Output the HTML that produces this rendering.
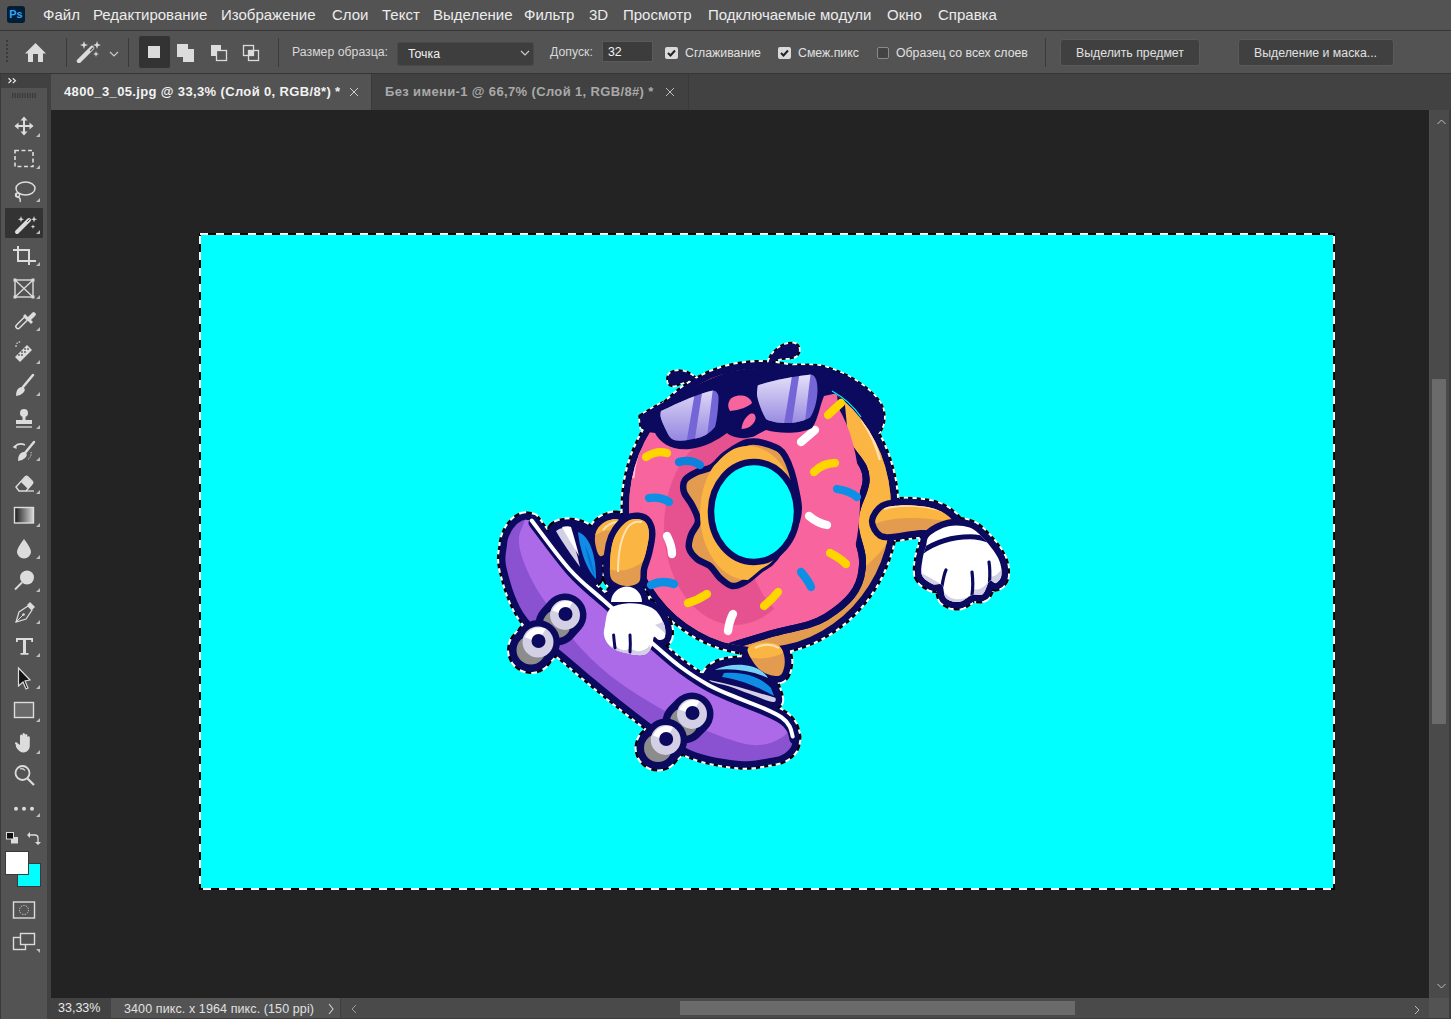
<!DOCTYPE html>
<html><head><meta charset="utf-8">
<style>
*{margin:0;padding:0;box-sizing:border-box}
html,body{width:1451px;height:1019px;overflow:hidden;background:#535353;font-family:"Liberation Sans",sans-serif;color:#e6e6e6}
.a{position:absolute}
#menubar{left:0;top:0;width:1451px;height:30px;background:#535353}
.mi{position:absolute;top:6px;font-size:15px;color:#ececec;white-space:nowrap}
#optline{left:0;top:30px;width:1451px;height:1px;background:#363636}
#opts{left:0;top:31px;width:1451px;height:42px;background:#535353}
#optline2{left:0;top:73px;width:1451px;height:1px;background:#363636}
.ot{position:absolute;font-size:12.3px;color:#e0e0e0;white-space:nowrap}
.tt{position:absolute;top:84px;font-size:13px;font-weight:bold;white-space:nowrap;letter-spacing:0.36px}
#tabrow{left:50px;top:74px;width:1401px;height:36px;background:#424242}
#canvas{left:51px;top:110px;width:1378px;height:888px;background:#232323}
#vscroll{left:1429px;top:110px;width:20px;height:888px;background:#4a4a4a;border-left:1px solid #4f4f4f}
#rstrip{left:1449px;top:110px;width:2px;height:909px;background:#3c3c3c}
#status{left:51px;top:998px;width:1398px;height:21px;background:#4a4a4a}
#toolhdr{left:1px;top:74px;width:46px;height:14px;background:#414141}
#tools{left:1px;top:89px;width:46px;height:930px;background:#535353}
#leftedge{left:0;top:74px;width:1px;height:945px;background:#3a3a3a}
#sep{left:47px;top:74px;width:4px;height:945px;background:#414141}
</style></head><body>
<div class="a" id="menubar">
  <div class="a" style="left:7px;top:6px;width:18px;height:17px;border-radius:3px;background:#001e36;color:#31a8ff;font-weight:bold;font-size:11px;line-height:17px;text-align:center">Ps</div>
  <span class="mi" style="left:43px">Файл</span>
  <span class="mi" style="left:93px">Редактирование</span>
  <span class="mi" style="left:221px">Изображение</span>
  <span class="mi" style="left:332px">Слои</span>
  <span class="mi" style="left:382px">Текст</span>
  <span class="mi" style="left:433px">Выделение</span>
  <span class="mi" style="left:524px">Фильтр</span>
  <span class="mi" style="left:589px">3D</span>
  <span class="mi" style="left:623px">Просмотр</span>
  <span class="mi" style="left:708px">Подключаемые модули</span>
  <span class="mi" style="left:887px">Окно</span>
  <span class="mi" style="left:938px">Справка</span>
</div>
<div class="a" id="optline"></div>
<div class="a" id="opts">
  <div class="a" style="left:6px;top:9px;width:2px;height:24px;background:repeating-linear-gradient(#3a3a3a 0 2px,transparent 2px 4px)"></div>
  <svg class="a" style="left:24px;top:11px" width="23" height="21" viewBox="0 0 23 21"><path d="M1 11.5 L11.5 1 L22 11.5 L19 11.5 L19 20 L14 20 L14 12 L9 12 L9 20 L4 20 L4 11.5 Z" fill="#dcdcdc"/></svg>
  <div class="a" style="left:66px;top:7px;width:1px;height:29px;background:#3a3a3a"></div>
  <svg class="a" style="left:76px;top:8.5px" width="26" height="23" viewBox="0 0 26 23"><path d="M3 21 L16 8" stroke="#dcdcdc" stroke-width="4.5" stroke-linecap="round"/><path d="M14.5 10.5 L17 8" stroke="#535353" stroke-width="1.2" stroke-linecap="round"/><path d="M8 1 L9 4 L12 5 L9 6 L8 9 L7 6 L4 5 L7 4Z M21 1 L22 4 L25 5 L22 6 L21 9 L20 6 L17 5 L20 4Z M20 11 L20.7 13.3 L23 14 L20.7 14.7 L20 17 L19.3 14.7 L17 14 L19.3 13.3Z" fill="#dcdcdc"/></svg>
  <svg class="a" style="left:109px;top:20px" width="10" height="7" viewBox="0 0 10 7"><path d="M1 1 L5 5 L9 1" stroke="#cfcfcf" stroke-width="1.1" fill="none"/></svg>
  <div class="a" style="left:128px;top:7px;width:1px;height:29px;background:#3a3a3a"></div>
  <div class="a" style="left:139px;top:5px;width:31px;height:32px;background:#333;border-radius:2px"></div>
  <div class="a" style="left:148px;top:15px;width:12px;height:12px;background:#dcdcdc"></div>
  <svg class="a" style="left:176px;top:12px" width="20" height="20" viewBox="0 0 20 20"><path d="M1 1h11v5h6v13H7v-5H1z" fill="#dcdcdc"/></svg>
  <svg class="a" style="left:210px;top:13px" width="18" height="18" viewBox="0 0 18 18"><path d="M1 1h10v5h-5v6H1z" fill="#dcdcdc"/><rect x="6.5" y="6.5" width="10" height="10" fill="none" stroke="#dcdcdc" stroke-width="1.3"/></svg>
  <svg class="a" style="left:242px;top:13px" width="18" height="18" viewBox="0 0 18 18"><rect x="1.5" y="1.5" width="10" height="10" fill="none" stroke="#dcdcdc" stroke-width="1.3"/><rect x="6.5" y="6.5" width="10" height="10" fill="none" stroke="#dcdcdc" stroke-width="1.3"/><rect x="6.5" y="6.5" width="5" height="5" fill="#dcdcdc"/></svg>
  <div class="a" style="left:278px;top:7px;width:1px;height:29px;background:#3a3a3a"></div>
  <span class="ot" style="left:292px;top:14px;color:#d8d8d8">Размер образца:</span>
  <div class="a" style="left:397px;top:11px;width:137px;height:24px;background:#3e3e3e;border:1px solid #494949;border-radius:3px"></div>
  <span class="ot" style="left:408px;top:16px;color:#f0f0f0">Точка</span>
  <svg class="a" style="left:520px;top:19px" width="10" height="7" viewBox="0 0 10 7"><path d="M1 1 L5 5 L9 1" stroke="#cfcfcf" stroke-width="1.1" fill="none"/></svg>
  <span class="ot" style="left:550px;top:14px;color:#d8d8d8">Допуск:</span>
  <div class="a" style="left:602px;top:10px;width:51px;height:21px;background:#3c3c3c;border:1px solid #5a5a5a"></div>
  <span class="ot" style="left:608px;top:14px;color:#f0f0f0">32</span>
  <div class="a" style="left:665px;top:16px;width:13px;height:12px;background:#dadada;border-radius:2px"></div>
  <svg class="a" style="left:665px;top:16px" width="13" height="12" viewBox="0 0 13 12"><path d="M3 6 L5.5 8.5 L10 3.5" stroke="#222" stroke-width="2" fill="none"/></svg>
  <span class="ot" style="left:685px;top:15px">Сглаживание</span>
  <div class="a" style="left:778px;top:16px;width:13px;height:12px;background:#dadada;border-radius:2px"></div>
  <svg class="a" style="left:778px;top:16px" width="13" height="12" viewBox="0 0 13 12"><path d="M3 6 L5.5 8.5 L10 3.5" stroke="#222" stroke-width="2" fill="none"/></svg>
  <span class="ot" style="left:798px;top:15px">Смеж.пикс</span>
  <div class="a" style="left:877px;top:16px;width:12px;height:12px;background:#444;border:1px solid #8a8a8a;border-radius:2px"></div>
  <span class="ot" style="left:896px;top:15px">Образец со всех слоев</span>
  <div class="a" style="left:1045px;top:7px;width:1px;height:29px;background:#3a3a3a"></div>
  <div class="a" style="left:1060px;top:8px;width:140px;height:27px;background:#404040;border:1px solid #5a5a5a;border-radius:3px"></div>
  <span class="ot" style="left:1076px;top:15px">Выделить предмет</span>
  <div class="a" style="left:1238px;top:8px;width:156px;height:27px;background:#404040;border:1px solid #5a5a5a;border-radius:3px"></div>
  <span class="ot" style="left:1254px;top:15px">Выделение и маска...</span>
</div>
<div class="a" id="optline2"></div>
<div class="a" id="tabrow">
  <div class="a" style="left:1px;top:0;width:320px;height:36px;background:#535353"></div>
  <div class="a" style="left:321px;top:0;width:1px;height:36px;background:#393939"></div>
  <div class="a" style="left:322px;top:0;width:316px;height:36px;background:#414141"></div>
  <div class="a" style="left:638px;top:0;width:1px;height:36px;background:#393939"></div>
</div>
<span class="tt" style="left:64px;color:#f2f2f2">4800_3_05.jpg @ 33,3% (Слой 0, RGB/8*) *</span>
<svg class="a" style="left:349px;top:87px" width="10" height="10" viewBox="0 0 10 10"><path d="M1 1L9 9M9 1L1 9" stroke="#cfcfcf" stroke-width="1"/></svg>
<span class="tt" style="left:385px;color:#a9a9a9">Без имени-1 @ 66,7% (Слой 1, RGB/8#) *</span>
<svg class="a" style="left:665px;top:87px" width="10" height="10" viewBox="0 0 10 10"><path d="M1 1L9 9M9 1L1 9" stroke="#bdbdbd" stroke-width="1"/></svg>

<div class="a" id="canvas"></div>
<div class="a" id="vscroll">
  <svg class="a" style="left:7px;top:9px" width="9" height="6" viewBox="0 0 9 6"><path d="M0.5 5L4.5 1L8.5 5" stroke="#bdbdbd" stroke-width="1" fill="none"/></svg>
  <div class="a" style="left:2px;top:269px;width:14px;height:345px;background:#6b6b6b;border-radius:1px"></div>
  <svg class="a" style="left:7px;top:873px" width="9" height="6" viewBox="0 0 9 6"><path d="M0.5 1L4.5 5L8.5 1" stroke="#bdbdbd" stroke-width="1" fill="none"/></svg>
</div>
<div class="a" id="rstrip"></div>
<div class="a" id="status">
  <div class="a" style="left:0;top:0;width:60px;height:20px;background:#424242"></div>
  <span class="a" style="left:7px;top:3px;font-size:12.5px;color:#e8e8e8">33,33%</span>
  <div class="a" style="left:60px;top:0;width:229px;height:20px;background:#535353"></div>
  <span class="a" style="left:73px;top:4px;font-size:12.5px;color:#e0e0e0;white-space:nowrap;letter-spacing:0.1px">3400 пикс. x 1964 пикс. (150 ppi)</span>
  <svg class="a" style="left:277px;top:5px" width="6" height="12" viewBox="0 0 6 12"><path d="M1 1L5 6L1 11" stroke="#d0d0d0" stroke-width="1.1" fill="none"/></svg>
  <div class="a" style="left:289px;top:0;width:1px;height:20px;background:#3e3e3e"></div>
  <svg class="a" style="left:300px;top:6px" width="6" height="10" viewBox="0 0 6 10"><path d="M5 1L1 5L5 9" stroke="#9a9a9a" stroke-width="1" fill="none"/></svg>
  <div class="a" style="left:629px;top:3px;width:395px;height:14px;background:#6b6b6b"></div>
  <svg class="a" style="left:1363px;top:7px" width="6" height="10" viewBox="0 0 6 10"><path d="M1 1L5 5L1 9" stroke="#bdbdbd" stroke-width="1" fill="none"/></svg>
  <div class="a" style="left:1378px;top:0;width:20px;height:20px;background:#535353"></div>
  <div class="a" style="left:0;top:20px;width:1398px;height:1px;background:#3c3c3c"></div>
</div>
<div class="a" id="leftedge"></div>
<div class="a" id="toolhdr"></div>
<div class="a" id="tools"></div>
<div class="a" id="sep"></div>
<svg class="a" style="left:0;top:0" width="48" height="1019" viewBox="0 0 48 1019">
<path d="M8.5 78.3l2.6 2.4-2.6 2.4M12.8 78.3l2.6 2.4-2.6 2.4" stroke="#e8e8e8" stroke-width="1.2" fill="none"/>
<g fill="#3a3a3a"><rect x="12" y="93" width="1.2" height="5"/><rect x="14.5" y="93" width="1.2" height="5"/><rect x="17" y="93" width="1.2" height="5"/><rect x="19.5" y="93" width="1.2" height="5"/><rect x="22" y="93" width="1.2" height="5"/><rect x="24.5" y="93" width="1.2" height="5"/><rect x="27" y="93" width="1.2" height="5"/><rect x="29.5" y="93" width="1.2" height="5"/><rect x="32" y="93" width="1.2" height="5"/><rect x="34.5" y="93" width="1.2" height="5"/></g>
<g fill="#dcdcdc" stroke="#dcdcdc">
<!-- move -->
<path d="M24 118v16M15.5 126h17" stroke-width="2" fill="none"/>
<path d="M24 116.5l-3.5 4h7z M24 135.5l-3.5-4h7z M14.5 126l4-3.5v7z M33.5 126l-4-3.5v7z" stroke="none"/>
<!-- marquee -->
<rect x="15" y="150.5" width="18" height="16" fill="none" stroke-width="1.6" stroke-dasharray="4 2.5"/>
<!-- lasso -->
<ellipse cx="25.5" cy="188.5" rx="9.5" ry="6.5" fill="none" stroke-width="1.5"/>
<path d="M17 193 q-2 3 1 4 q3 1 2 5" fill="none" stroke-width="1.4"/>
<circle cx="17.5" cy="195" r="2" fill="none" stroke-width="1.3"/>
</g>
<rect x="5" y="208" width="38" height="30" fill="#333" rx="1"/>
<g fill="#dcdcdc" stroke="#dcdcdc">
<!-- wand -->
<path d="M17 232 L29 220" stroke-width="4" stroke-linecap="round" fill="none"/>
<path d="M27.5 221.5 L29.3 219.7" stroke="#333" stroke-width="1" stroke-linecap="round"/>
<path d="M21 216l0.8 2.4 2.4.8-2.4.8-.8 2.4-.8-2.4-2.4-.8 2.4-.8z M34 216l0.8 2.4 2.4.8-2.4.8-.8 2.4-.8-2.4-2.4-.8 2.4-.8z M33 224.5l.6 1.6 1.6.6-1.6.6-.6 1.6-.6-1.6-1.6-.6 1.6-.6z" stroke="none"/>
<!-- crop -->
<path d="M18 246v15h15M13 250h16v15" fill="none" stroke-width="2"/>
<path d="M33 261h3" stroke-width="2"/>
<!-- frame -->
<rect x="15" y="280" width="18" height="17" fill="none" stroke-width="1.4"/>
<path d="M15 280L33 297M33 280L15 297" stroke-width="1.3"/>
<g stroke="none"><rect x="13.5" y="278.5" width="3" height="3"/><rect x="31.5" y="278.5" width="3" height="3"/><rect x="13.5" y="295.5" width="3" height="3"/><rect x="31.5" y="295.5" width="3" height="3"/></g>
<!-- eyedropper -->
<path d="M16.5 328 q-1.5-1.5 0-3 l8-8 3 3 -8 8 q-1.5 1.5-3 0z" fill="none" stroke-width="1.5"/>
<path d="M23 316l2-2 3 3 4-4q2-2 3 0q2 1 0 3l-4 4 2 2-2 2z" stroke="none"/>
<!-- healing -->
<path d="M20 362l-5-5 12-12 5 5z" stroke="none"/>
<path d="M16 347 q0-6 6-5" fill="none" stroke-width="1.2" stroke-dasharray="1.5 1.5"/>
<g fill="#535353" stroke="none"><circle cx="22" cy="352" r=".9"/><circle cx="25" cy="352" r=".9"/><circle cx="22" cy="355" r=".9"/><circle cx="25" cy="349" r=".9"/><circle cx="28" cy="349" r=".9"/><circle cx="19" cy="355" r=".9"/></g>
<!-- brush -->
<path d="M33 375 L23 387" stroke-width="2.5" stroke-linecap="round" fill="none"/>
<path d="M16 396 q0-6 3-8 q3-2 5 0 q2 2-1 5 q-3 3-7 3z" stroke="none"/>
<!-- stamp -->
<circle cx="24" cy="413" r="4" stroke="none"/>
<path d="M22.5 416h3v4h-3z M16 420h16v4H16z" stroke="none"/>
<path d="M16 427h16" stroke-width="1.3"/>
<!-- history brush -->
<path d="M34 442 L25 453" stroke-width="2.5" stroke-linecap="round" fill="none"/>
<path d="M18 461 q0-6 3-8 q3-2 5 0 q2 2-1 5 q-3 3-7 3z" stroke="none"/>
<path d="M14 447 q5-5 11-2" fill="none" stroke-width="1.5"/>
<path d="M12.5 447l4-2 0 4z" stroke="none"/>
<path d="M31 452 q1 5-4 8" fill="none" stroke-width="1" stroke-dasharray="1.2 1.2"/>
<!-- eraser -->
<path d="M16 487 l9-10 q1.5-1.5 3 0 l4 4 q1.5 1.5 0 3 l-6 7 h-7z" fill="none" stroke-width="1.4"/>
<path d="M21 482 l4-4.5 q1.5-1.5 3 0 l4 4 q1.5 1.5 0 3 l-4 4.5z" stroke="none"/>
<path d="M26 491h8" stroke-width="1.3"/>
</g>
<defs><linearGradient id="gr" x1="0" x2="1"><stop offset="0" stop-color="#1a1a1a"/><stop offset="1" stop-color="#d8d8d8"/></linearGradient></defs>
<rect x="14.5" y="507.5" width="19" height="15.5" fill="url(#gr)" stroke="#dcdcdc" stroke-width="1.4"/>
<g fill="#dcdcdc" stroke="#dcdcdc">
<!-- drop -->
<path d="M24 539 q-7 9-7 13 a7 6.5 0 0 0 14 0 q0-4-7-13z" stroke="none"/>
<!-- dodge -->
<circle cx="27" cy="577.5" r="7" stroke="none"/>
<path d="M15 589.5 L22 582.5" stroke-width="1.8" fill="none"/>
<!-- pen -->
<path d="M16 622 l3-10 l9-6 l4 4 l-6 9z" fill="none" stroke-width="1.2"/>
<path d="M27 605 l3-3 l5 5 -3 3z" stroke="none"/>
<path d="M16 622 l7-7" stroke-width="1"/>
<circle cx="23.5" cy="614.5" r="1.3" stroke="none"/>
<!-- type -->
<path d="M16 638h17v4h-1.8v-2H26v13h2.5v1.8h-8V653H23V640h-5.2v2H16z" stroke="none"/>
</g>
<!-- path select -->
<path d="M18.5 668 L30 680 L25 681 L28 688 L26 689 L23 682 L18.5 686Z" fill="#111" stroke="#dcdcdc" stroke-width="1.2"/>
<rect x="14.5" y="702.5" width="19" height="15" fill="#6a6a6a" stroke="#dcdcdc" stroke-width="1.4"/>
<g fill="#dcdcdc" stroke="#dcdcdc">
<!-- hand -->
<path d="M16 745 q-2-2 0-3 l4 3 v-9 q0-1.5 1.2-1.5 q1.2 0 1.2 1.5 v-1.5 q0-1.5 1.3-1.5 q1.3 0 1.3 1.5 v1 q0-1.5 1.2-1.5 q1.2 0 1.2 1.5 v2 q0-1.3 1.2-1.3 q1.2 0 1.2 1.3 v8 q0 6-6 7 q-5 0-8-6z" stroke="none"/>
<!-- zoom -->
<circle cx="22.5" cy="773" r="7" fill="none" stroke-width="1.8"/>
<path d="M27.5 778.5 L34 785" stroke-width="2.2"/>
<path d="M20 769 q3-1 5 1.5" fill="none" stroke-width="1.2"/>
<!-- more -->
<circle cx="16" cy="808.7" r="2" stroke="none"/><circle cx="24" cy="808.7" r="2" stroke="none"/><circle cx="32" cy="808.7" r="2" stroke="none"/>
</g>
<path d="M40 133V137H36Z" fill="#bdbdbd"/>
<path d="M40 165V169H36Z" fill="#bdbdbd"/>
<path d="M40 198V202H36Z" fill="#bdbdbd"/>
<path d="M40 230V234H36Z" fill="#bdbdbd"/>
<path d="M40 262V266H36Z" fill="#bdbdbd"/>
<path d="M40 295V299H36Z" fill="#bdbdbd"/>
<path d="M40 327V331H36Z" fill="#bdbdbd"/>
<path d="M40 360V364H36Z" fill="#bdbdbd"/>
<path d="M40 392V396H36Z" fill="#bdbdbd"/>
<path d="M40 425V429H36Z" fill="#bdbdbd"/>
<path d="M40 457V461H36Z" fill="#bdbdbd"/>
<path d="M40 490V494H36Z" fill="#bdbdbd"/>
<path d="M40 523V527H36Z" fill="#bdbdbd"/>
<path d="M40 555V559H36Z" fill="#bdbdbd"/>
<path d="M40 588V592H36Z" fill="#bdbdbd"/>
<path d="M40 620V624H36Z" fill="#bdbdbd"/>
<path d="M40 653V657H36Z" fill="#bdbdbd"/>
<path d="M40 685V689H36Z" fill="#bdbdbd"/>
<path d="M40 718V722H36Z" fill="#bdbdbd"/>
<path d="M40 750V754H36Z" fill="#bdbdbd"/>
<path d="M40 813V817H36Z" fill="#bdbdbd"/>
<!-- small swatches -->
<rect x="11" y="837" width="7" height="6.5" fill="#dcdcdc"/>
<rect x="6.5" y="832.5" width="7" height="6.5" fill="#111" stroke="#dcdcdc" stroke-width="1"/>
<path d="M29 835 h6 q3 0 3 3 v5" stroke="#dcdcdc" stroke-width="1.3" fill="none"/>
<path d="M27 835 l3-3 v6z M38 845 l-3-3 h6z" fill="#dcdcdc"/>
<rect x="17.5" y="863.5" width="23" height="23" fill="#00ffff" stroke="#3a3a3a" stroke-width="1"/>
<rect x="5.5" y="851.5" width="23" height="23" fill="#ffffff" stroke="#3a3a3a" stroke-width="1"/>
<!-- quick mask -->
<rect x="13.5" y="902" width="21" height="16" fill="none" stroke="#dcdcdc" stroke-width="1.4"/>
<circle cx="24" cy="910" r="4.5" fill="none" stroke="#dcdcdc" stroke-width="1" stroke-dasharray="1.2 1.3"/>
<!-- screen mode -->
<rect x="13.5" y="937.5" width="12" height="12" fill="none" stroke="#dcdcdc" stroke-width="1.4"/>
<rect x="20.5" y="933.5" width="14" height="11" fill="#535353" stroke="#dcdcdc" stroke-width="1.4"/>
<path d="M40 953V949H36Z" fill="#bdbdbd"/>
</svg>
<!-- image -->
<svg class="a" id="img" style="left:199px;top:233px" width="1136" height="657" viewBox="199 233 1136 657">
<rect x="199" y="233" width="1136" height="657" fill="#00ffff"/>
<!--DONUT--><defs>
<linearGradient id="lens" x1="0" y1="0" x2="0" y2="1"><stop offset="0" stop-color="#ece8fa"/><stop offset="1" stop-color="#8e80de"/></linearGradient>
<clipPath id="dclip"><ellipse cx="760" cy="508" rx="131" ry="139.5"/></clipPath>
<g id="sil"><path d="M875.4 521.0C875.7 516.9 879.9 511.1 884.0 508.5C888.1 505.9 894.2 505.9 900.0 505.5C905.8 505.1 912.9 505.4 918.7 506.0C924.5 506.6 930.1 507.3 935.0 509.0C939.9 510.7 944.7 513.3 948.0 516.0C951.3 518.7 956.3 522.3 955.0 525.0C953.7 527.7 945.0 531.2 940.0 532.0C935.0 532.8 929.7 530.2 925.0 530.0C920.3 529.8 916.8 530.4 911.8 531.0C906.8 531.6 900.0 533.2 895.0 533.5C890.0 533.8 885.3 535.1 882.0 533.0C878.7 530.9 875.1 525.1 875.4 521.0Z"/><path d="M929.9 535.5C933.6 532.2 941.8 527.5 948.4 526.2C955.0 524.9 963.4 525.2 969.6 527.6C975.8 530.0 980.6 535.5 985.5 540.8C990.4 546.1 996.1 553.6 998.8 559.4C1001.4 565.1 1001.9 571.4 1001.4 575.3C1000.9 579.2 998.0 582.0 996.0 583.0C994.0 584.0 991.7 579.2 989.5 581.0C987.3 582.8 985.8 591.7 982.9 594.0C980.0 596.3 976.0 593.7 972.0 595.0C968.0 596.3 963.3 601.5 959.0 602.0C954.7 602.5 948.8 600.8 946.0 598.0C943.2 595.2 944.2 587.3 942.0 585.0C939.8 582.7 935.8 585.6 932.5 584.0C929.2 582.4 923.7 579.4 922.0 575.3C920.3 571.2 921.8 564.3 922.5 559.4C923.2 554.5 924.8 550.0 926.0 546.0C927.2 542.0 926.2 538.8 929.9 535.5Z"/><path d="M600.0 556.0C597.5 554.8 595.5 546.3 595.0 542.0C594.5 537.7 595.3 533.3 597.0 530.0C598.7 526.7 601.8 523.8 605.0 522.0C608.2 520.2 613.2 518.7 616.0 519.0C618.8 519.3 621.3 521.2 622.0 524.0C622.7 526.8 622.0 531.8 620.0 536.0C618.0 540.2 613.3 545.7 610.0 549.0C606.7 552.3 602.5 557.2 600.0 556.0Z"/><path d="M612.0 580.0C609.3 576.5 610.0 570.8 610.0 565.0C610.0 559.2 610.7 550.7 612.0 545.0C613.3 539.3 615.3 535.0 618.0 531.0C620.7 527.0 624.7 523.0 628.0 521.0C631.3 519.0 635.0 518.7 638.0 519.0C641.0 519.3 644.2 520.5 646.0 523.0C647.8 525.5 649.0 529.2 649.0 534.0C649.0 538.8 647.3 546.3 646.0 552.0C644.7 557.7 642.2 563.0 641.0 568.0C639.8 573.0 641.5 579.0 639.0 582.0C636.5 585.0 630.5 586.3 626.0 586.0C621.5 585.7 614.7 583.5 612.0 580.0Z"/><path d="M555.0 531.0C556.0 527.8 561.8 526.5 566.0 526.0C570.2 525.5 576.0 526.5 580.0 528.0C584.0 529.5 587.7 531.7 590.0 535.0C592.3 538.3 593.0 543.0 594.0 548.0C595.0 553.0 595.8 560.0 596.0 565.0C596.2 570.0 596.7 576.2 595.0 578.0C593.3 579.8 589.8 579.0 586.0 576.0C582.2 573.0 576.3 565.2 572.0 560.0C567.7 554.8 562.8 549.8 560.0 545.0C557.2 540.2 554.0 534.2 555.0 531.0Z"/><path d="M532.0 521.0C538.3 529.2 558.1 556.7 570.0 570.0C581.9 583.3 589.1 587.9 603.4 600.6C617.7 613.4 642.9 635.4 655.8 646.5C668.7 657.6 672.2 661.0 681.0 667.5C689.8 674.0 699.5 680.4 708.7 685.4C717.9 690.4 726.8 693.8 736.0 697.7C745.2 701.6 756.0 705.3 763.7 708.7C771.4 712.1 777.6 715.0 782.0 718.0C786.4 721.0 788.2 723.8 790.0 727.0C791.8 730.2 792.5 735.3 793.0 737.0L793.0 737.0C792.7 738.7 792.8 744.0 791.0 747.0C789.2 750.0 785.5 753.2 782.0 755.0C778.5 756.8 777.0 757.0 770.0 758.0C763.0 759.0 753.3 762.3 740.0 761.0C726.7 759.7 706.2 757.2 690.0 750.0C673.8 742.8 661.3 731.8 643.0 718.0C624.7 704.2 599.3 683.7 580.0 667.0C560.7 650.3 539.2 634.2 527.0 618.0C514.8 601.8 510.3 582.2 507.0 570.0C503.7 557.8 506.5 551.0 507.0 545.0C507.5 539.0 508.5 537.3 510.0 534.0C511.5 530.7 513.7 527.3 516.0 525.0C518.3 522.7 521.3 520.7 524.0 520.0C526.7 519.3 530.7 520.8 532.0 521.0Z"/><path d="M605.0 625.0C605.8 620.8 606.2 613.5 609.0 610.0C611.8 606.5 616.8 605.0 622.0 604.0C627.2 603.0 634.5 603.0 640.0 604.0C645.5 605.0 651.0 606.7 655.0 610.0C659.0 613.3 662.3 619.5 664.0 624.0C665.7 628.5 665.8 634.3 665.0 637.0C664.2 639.7 660.8 640.0 659.0 640.0C657.2 640.0 655.2 636.0 654.0 637.0C652.8 638.0 653.3 643.2 652.0 646.0C650.7 648.8 648.7 652.5 646.0 654.0C643.3 655.5 639.3 655.2 636.0 655.0C632.7 654.8 629.3 653.8 626.0 653.0C622.7 652.2 619.0 651.5 616.0 650.0C613.0 648.5 610.0 646.5 608.0 644.0C606.0 641.5 604.5 638.2 604.0 635.0C603.5 631.8 604.2 629.2 605.0 625.0Z"/><path d="M611 602C611 593 619 586.5 627 586.5C635 586.5 642 593 642 602Z"/><path d="M748.0 652.0C746.7 647.8 749.3 646.6 752.0 645.0C754.7 643.4 759.7 642.5 764.0 642.5C768.3 642.5 774.7 642.9 778.0 645.0C781.3 647.1 783.0 651.2 784.0 655.0C785.0 658.8 785.0 664.5 784.0 668.0C783.0 671.5 782.0 675.7 778.0 676.0C774.0 676.3 765.0 674.0 760.0 670.0C755.0 666.0 749.3 656.2 748.0 652.0Z"/><path d="M709.0 680.0C707.3 677.0 712.0 670.7 718.0 668.0C724.0 665.3 737.2 663.0 745.0 664.0C752.8 665.0 760.3 669.7 765.0 674.0C769.7 678.3 771.5 685.3 773.0 690.0C774.5 694.7 777.8 701.3 774.0 702.0C770.2 702.7 757.7 696.7 750.0 694.0C742.3 691.3 734.8 688.3 728.0 686.0C721.2 683.7 710.7 683.0 709.0 680.0Z"/><ellipse cx="760" cy="508" rx="131" ry="139.5"/></g>
<g id="wsil"><circle cx="565" cy="615" r="15"/><circle cx="557" cy="624" r="15"/><circle cx="538" cy="642" r="15.5"/><circle cx="531" cy="650" r="15.5"/><circle cx="692" cy="714" r="15"/><circle cx="684" cy="722" r="15"/><circle cx="665.7" cy="740" r="15"/><circle cx="658" cy="748" r="15"/></g>
<g id="thin"><path d="M668 380C667 374 672 371 679 371C686 371 692 375 698 380C690 380 682 382 675 385.5C670 386 668 384 668 380Z"/><path d="M768 366C768 358 775 349 784 345C792 342 799 343 799 350C799 356 793 358 786 358C779 358 772 361 768 366Z"/><path d="M640 416C670 398 700 382 728 372C760 366 800 364 820 366C845 372 868 386 880 403C886 413 885 425 878 434L874 436C868 425 856 410 838 393L824 396C820 405 818 420 812 428C800 434 780 434 766 430C762 432 758 434 755 436C745 440 733 438 727 433C718 440 705 447 690 449C672 451 660 443 655 433L648 432L641 428Z"/></g>
</defs>
<use href="#thin" fill="#fff" stroke="#fff" stroke-width="3.5" stroke-linejoin="round"/>
<use href="#thin" fill="none" stroke="#000" stroke-width="3.5" stroke-linejoin="round" stroke-dasharray="4 4"/>
<use href="#sil" fill="#fff" stroke="#fff" stroke-width="17" stroke-linejoin="round"/>
<use href="#sil" fill="none" stroke="#000" stroke-width="17" stroke-linejoin="round" stroke-dasharray="4 4"/>
<use href="#wsil" fill="#fff" stroke="#fff" stroke-width="17" stroke-linejoin="round"/>
<use href="#wsil" fill="none" stroke="#000" stroke-width="17" stroke-linejoin="round" stroke-dasharray="4 4"/>
<use href="#thin" fill="#0c0a5f"/>
<use href="#sil" fill="#0c0a5f" stroke="#0c0a5f" stroke-width="13" stroke-linejoin="round"/>
<ellipse cx="760" cy="508" rx="131" ry="139.5" fill="#e39c4f"/>
<g clip-path="url(#dclip)">
<ellipse cx="800" cy="470" rx="110" ry="120" fill="#fbb543"/>
<path d="M862 420C870 432 876 445 880 460" stroke="#ffe2b5" stroke-width="2.5" fill="none"/>
<path d="M600 300L832 300C840 380 842 420 845 438C850 455 868 462 866 482C864 497 855 505 855 522C855 540 865 550 862 570C860 590 848 603 826 617C810 627 790 628 770 634C752 640 738 643 720 650L600 700Z" fill="#f8649d" stroke="#0c0a5f" stroke-width="7" stroke-linejoin="round"/>
<clipPath id="icl"><path d="M600 300L832 300C840 380 842 420 845 438C850 455 868 462 866 482C864 497 855 505 855 522C855 540 865 550 862 570C860 590 848 603 826 617C810 627 790 628 770 634C752 640 738 643 720 650L600 700Z"/></clipPath>
<g clip-path="url(#icl)"><path d="M600 628C640 650 700 652 760 640L760 680L600 680Z" fill="#e6528f"/></g>
<path d="M845 438C850 455 868 462 866 482C864 497 855 505 855 522C855 540 865 550 862 570C860 590 848 603 826 617C810 627 790 628 770 634C752 640 738 643 720 650" fill="none" stroke="#0c0a5f" stroke-width="7" stroke-linejoin="round"/>
<path d="M643 436C636 449 632 462 631 478" stroke="#ffc3dc" stroke-width="7" fill="none"/>
</g>
<ellipse cx="735" cy="527" rx="71" ry="98" fill="#e6528f"/>
<ellipse cx="800" cy="500" rx="60" ry="120" fill="#f8649d"/>
<clipPath id="wclip"><path d="M748.0 442.0C755.3 440.5 763.8 442.7 770.0 445.0C776.2 447.3 780.7 448.5 785.0 456.0C789.3 463.5 794.0 479.3 796.0 490.0C798.0 500.7 800.5 508.7 797.0 520.0C793.5 531.3 781.2 549.7 775.0 558.0C768.8 566.3 765.0 566.0 760.0 570.0C755.0 574.0 749.7 579.3 745.0 582.0C740.3 584.7 736.2 586.7 732.0 586.0C727.8 585.3 723.7 581.3 720.0 578.0C716.3 574.7 713.8 569.2 710.0 566.0C706.2 562.8 700.5 562.0 697.0 559.0C693.5 556.0 690.0 552.0 689.0 548.0C688.0 544.0 689.5 539.5 691.0 535.0C692.5 530.5 697.8 526.0 698.0 521.0C698.2 516.0 694.3 509.8 692.0 505.0C689.7 500.2 685.2 496.2 684.0 492.0C682.8 487.8 682.8 483.3 685.0 480.0C687.2 476.7 692.5 474.2 697.0 472.0C701.5 469.8 707.2 470.0 712.0 467.0C716.8 464.0 720.0 458.2 726.0 454.0C732.0 449.8 740.7 443.5 748.0 442.0Z"/></clipPath>
<path d="M748.0 442.0C755.3 440.5 763.8 442.7 770.0 445.0C776.2 447.3 780.7 448.5 785.0 456.0C789.3 463.5 794.0 479.3 796.0 490.0C798.0 500.7 800.5 508.7 797.0 520.0C793.5 531.3 781.2 549.7 775.0 558.0C768.8 566.3 765.0 566.0 760.0 570.0C755.0 574.0 749.7 579.3 745.0 582.0C740.3 584.7 736.2 586.7 732.0 586.0C727.8 585.3 723.7 581.3 720.0 578.0C716.3 574.7 713.8 569.2 710.0 566.0C706.2 562.8 700.5 562.0 697.0 559.0C693.5 556.0 690.0 552.0 689.0 548.0C688.0 544.0 689.5 539.5 691.0 535.0C692.5 530.5 697.8 526.0 698.0 521.0C698.2 516.0 694.3 509.8 692.0 505.0C689.7 500.2 685.2 496.2 684.0 492.0C682.8 487.8 682.8 483.3 685.0 480.0C687.2 476.7 692.5 474.2 697.0 472.0C701.5 469.8 707.2 470.0 712.0 467.0C716.8 464.0 720.0 458.2 726.0 454.0C732.0 449.8 740.7 443.5 748.0 442.0Z" fill="#e39c4f" stroke="#0c0a5f" stroke-width="6.5" stroke-linejoin="round"/>
<g clip-path="url(#wclip)"><ellipse cx="748" cy="513" rx="48" ry="67" fill="#fbb543"/></g>
<ellipse cx="754" cy="512" rx="43" ry="50" fill="#00ffff" stroke="#0c0a5f" stroke-width="6.5"/>
<clipPath id="rac"><path d="M875.4 521.0C875.7 516.9 879.9 511.1 884.0 508.5C888.1 505.9 894.2 505.9 900.0 505.5C905.8 505.1 912.9 505.4 918.7 506.0C924.5 506.6 930.1 507.3 935.0 509.0C939.9 510.7 944.7 513.3 948.0 516.0C951.3 518.7 956.3 522.3 955.0 525.0C953.7 527.7 945.0 531.2 940.0 532.0C935.0 532.8 929.7 530.2 925.0 530.0C920.3 529.8 916.8 530.4 911.8 531.0C906.8 531.6 900.0 533.2 895.0 533.5C890.0 533.8 885.3 535.1 882.0 533.0C878.7 530.9 875.1 525.1 875.4 521.0Z"/></clipPath>
<path d="M875.4 521.0C875.7 516.9 879.9 511.1 884.0 508.5C888.1 505.9 894.2 505.9 900.0 505.5C905.8 505.1 912.9 505.4 918.7 506.0C924.5 506.6 930.1 507.3 935.0 509.0C939.9 510.7 944.7 513.3 948.0 516.0C951.3 518.7 956.3 522.3 955.0 525.0C953.7 527.7 945.0 531.2 940.0 532.0C935.0 532.8 929.7 530.2 925.0 530.0C920.3 529.8 916.8 530.4 911.8 531.0C906.8 531.6 900.0 533.2 895.0 533.5C890.0 533.8 885.3 535.1 882.0 533.0C878.7 530.9 875.1 525.1 875.4 521.0Z" fill="#e39c4f" stroke="#0c0a5f" stroke-width="13" paint-order="stroke"/>
<g clip-path="url(#rac)"><path d="M870 526C885 518 915 515 950 522L950 500L870 500Z" fill="#fbb543"/>
<path d="M884 509C900 504 925 504 950 513" stroke="#ffe2b5" stroke-width="2.2" fill="none"/></g>
<clipPath id="rgc"><path d="M929.9 535.5C933.6 532.2 941.8 527.5 948.4 526.2C955.0 524.9 963.4 525.2 969.6 527.6C975.8 530.0 980.6 535.5 985.5 540.8C990.4 546.1 996.1 553.6 998.8 559.4C1001.4 565.1 1001.9 571.4 1001.4 575.3C1000.9 579.2 998.0 582.0 996.0 583.0C994.0 584.0 991.7 579.2 989.5 581.0C987.3 582.8 985.8 591.7 982.9 594.0C980.0 596.3 976.0 593.7 972.0 595.0C968.0 596.3 963.3 601.5 959.0 602.0C954.7 602.5 948.8 600.8 946.0 598.0C943.2 595.2 944.2 587.3 942.0 585.0C939.8 582.7 935.8 585.6 932.5 584.0C929.2 582.4 923.7 579.4 922.0 575.3C920.3 571.2 921.8 564.3 922.5 559.4C923.2 554.5 924.8 550.0 926.0 546.0C927.2 542.0 926.2 538.8 929.9 535.5Z"/></clipPath>
<path d="M929.9 535.5C933.6 532.2 941.8 527.5 948.4 526.2C955.0 524.9 963.4 525.2 969.6 527.6C975.8 530.0 980.6 535.5 985.5 540.8C990.4 546.1 996.1 553.6 998.8 559.4C1001.4 565.1 1001.9 571.4 1001.4 575.3C1000.9 579.2 998.0 582.0 996.0 583.0C994.0 584.0 991.7 579.2 989.5 581.0C987.3 582.8 985.8 591.7 982.9 594.0C980.0 596.3 976.0 593.7 972.0 595.0C968.0 596.3 963.3 601.5 959.0 602.0C954.7 602.5 948.8 600.8 946.0 598.0C943.2 595.2 944.2 587.3 942.0 585.0C939.8 582.7 935.8 585.6 932.5 584.0C929.2 582.4 923.7 579.4 922.0 575.3C920.3 571.2 921.8 564.3 922.5 559.4C923.2 554.5 924.8 550.0 926.0 546.0C927.2 542.0 926.2 538.8 929.9 535.5Z" fill="#fff" stroke="#0c0a5f" stroke-width="13" paint-order="stroke"/>
<g clip-path="url(#rgc)">
<path d="M915 570C925 575 935 580 942 585L946 610L915 610Z M944 592C950 600 960 602 972 595L975 615L940 615Z M972 588C978 592 985 588 990 578L995 600L970 600Z M990 576C995 578 1000 572 1004 565L1004 600L988 600Z" fill="#d3cfe5"/>
<path d="M942 586C943 580 944 574 946 570M972 595C973 588 973 580 972 572M989.5 582C990 575 990 568 989 562" stroke="#0c0a5f" stroke-width="3.2" fill="none" stroke-linecap="round"/>
<path d="M920 553C935 542 955 536 975 537C985 538 992 541 1000 546" stroke="#0c0a5f" stroke-width="5" fill="none"/>
</g>
<g stroke-width="8.3" stroke-linecap="round" fill="none">
<path d="M828 415L841 403" stroke="#ffd500"/>
<path d="M801 442L815 430" stroke="#fff"/>
<path d="M646 457C652 453 660 451 667 453" stroke="#ffd500"/>
<path d="M679 462C686 460 694 461 700 465" stroke="#0d82dd"/>
<path d="M814 472C820 466 828 463 835 463" stroke="#ffd500"/>
<path d="M837 489C845 490 852 493 857 497" stroke="#0d8fe6"/>
<path d="M649 498C656 497 663 498 669 502" stroke="#0d8fe6"/>
<path d="M809 516C815 521 821 524 827 525" stroke="#fff"/>
<path d="M667 536C670 542 672 548 672 554" stroke="#fff"/>
<path d="M830 553C836 556 842 560 846 564" stroke="#ffd500"/>
<path d="M801 572C806 578 809 582 811 587" stroke="#0d8fe6"/>
<path d="M651 585C657 582 666 581 674 584" stroke="#0d8fe6"/>
<path d="M688 603C695 601 701 598 707 594" stroke="#ffd500"/>
<path d="M764 606C769 602 774 597 778 592" stroke="#ffd500"/>
<path d="M728 631C729 624 730 619 733 614" stroke="#fff"/>
</g>
<path d="M640 416C670 398 700 382 728 372C760 366 800 364 820 366C845 372 868 386 880 403C886 413 885 425 878 434L874 436C868 425 856 410 838 393L824 396C820 405 818 420 812 428C800 434 780 434 766 430C762 432 758 434 755 436C745 440 733 438 727 433C718 440 705 447 690 449C672 451 660 443 655 433L648 432L641 428Z" fill="#0c0a5f"/>
<clipPath id="lcl"><path d="M661 411C680 402 700 393 713 390.5C717 391 719 394 718.5 400C718 410 717 420 715 427C710 433 705 436 698 438C690 440 682 441 677 440.5C672 440 669 437 667 432C664 426 661 420 660.5 416C660.5 414 660.5 412 661 411Z"/></clipPath><clipPath id="rcl"><path d="M757.5 385.5C770 381 795 376 811 374.5C815 375 817.5 380 817.5 391C817 402 814 412 810 417.5C805 421 795 423 786 423C778 423 770 421.5 766 419C762 412 758 402 757 395C757 390 757 387 757.5 385.5Z"/></clipPath>
<path d="M661 411C680 402 700 393 713 390.5C717 391 719 394 718.5 400C718 410 717 420 715 427C710 433 705 436 698 438C690 440 682 441 677 440.5C672 440 669 437 667 432C664 426 661 420 660.5 416C660.5 414 660.5 412 661 411Z" fill="#7466d6"/><path d="M757.5 385.5C770 381 795 376 811 374.5C815 375 817.5 380 817.5 391C817 402 814 412 810 417.5C805 421 795 423 786 423C778 423 770 421.5 766 419C762 412 758 402 757 395C757 390 757 387 757.5 385.5Z" fill="#7466d6"/>
<g clip-path="url(#lcl)"><path d="M662 380L697 380L686 445L655 445Z M704 380L714 380L706 445L694 445Z" fill="url(#lens)"/></g>
<g clip-path="url(#rcl)"><path d="M760 370L793 370L783 430L752 430Z M800 370L811 370L804 430L791 430Z" fill="url(#lens)"/></g>
<path d="M728.5 403C730 397 736 395 742 395.5C747 396 751 399 752 403C748 407 740 410 730 411C728 408 728 405 728.5 403Z" fill="#f8649d"/>
<path d="M741.5 429C742 422 746 416 751 413.5C754 413 756 415 755.5 419C754 425 748 429 741.5 429Z" fill="#f8649d"/>
<path d="M832 391C843 397 854 407 861 417" stroke="#00f0ff" stroke-width="1.3" fill="none"/>
<clipPath id="lgc"><path d="M600.0 556.0C597.5 554.8 595.5 546.3 595.0 542.0C594.5 537.7 595.3 533.3 597.0 530.0C598.7 526.7 601.8 523.8 605.0 522.0C608.2 520.2 613.2 518.7 616.0 519.0C618.8 519.3 621.3 521.2 622.0 524.0C622.7 526.8 622.0 531.8 620.0 536.0C618.0 540.2 613.3 545.7 610.0 549.0C606.7 552.3 602.5 557.2 600.0 556.0Z"/></clipPath>
<path d="M600.0 556.0C597.5 554.8 595.5 546.3 595.0 542.0C594.5 537.7 595.3 533.3 597.0 530.0C598.7 526.7 601.8 523.8 605.0 522.0C608.2 520.2 613.2 518.7 616.0 519.0C618.8 519.3 621.3 521.2 622.0 524.0C622.7 526.8 622.0 531.8 620.0 536.0C618.0 540.2 613.3 545.7 610.0 549.0C606.7 552.3 602.5 557.2 600.0 556.0Z" fill="#e39c4f"/>
<g clip-path="url(#lgc)"><path d="M590 540C600 530 610 528 625 533L625 510L590 510Z" fill="#fbb543"/><path d="M603 530C608 524 613 522 618 522" stroke="#ffe2b5" stroke-width="2" fill="none"/></g>
<clipPath id="lac"><path d="M612.0 580.0C609.3 576.5 610.0 570.8 610.0 565.0C610.0 559.2 610.7 550.7 612.0 545.0C613.3 539.3 615.3 535.0 618.0 531.0C620.7 527.0 624.7 523.0 628.0 521.0C631.3 519.0 635.0 518.7 638.0 519.0C641.0 519.3 644.2 520.5 646.0 523.0C647.8 525.5 649.0 529.2 649.0 534.0C649.0 538.8 647.3 546.3 646.0 552.0C644.7 557.7 642.2 563.0 641.0 568.0C639.8 573.0 641.5 579.0 639.0 582.0C636.5 585.0 630.5 586.3 626.0 586.0C621.5 585.7 614.7 583.5 612.0 580.0Z"/></clipPath>
<path d="M612.0 580.0C609.3 576.5 610.0 570.8 610.0 565.0C610.0 559.2 610.7 550.7 612.0 545.0C613.3 539.3 615.3 535.0 618.0 531.0C620.7 527.0 624.7 523.0 628.0 521.0C631.3 519.0 635.0 518.7 638.0 519.0C641.0 519.3 644.2 520.5 646.0 523.0C647.8 525.5 649.0 529.2 649.0 534.0C649.0 538.8 647.3 546.3 646.0 552.0C644.7 557.7 642.2 563.0 641.0 568.0C639.8 573.0 641.5 579.0 639.0 582.0C636.5 585.0 630.5 586.3 626.0 586.0C621.5 585.7 614.7 583.5 612.0 580.0Z" fill="#e39c4f" stroke="#0c0a5f" stroke-width="13" paint-order="stroke"/>
<g clip-path="url(#lac)"><path d="M600 565C615 575 635 572 650 555L650 510L600 510Z" fill="#fbb543"/>
<path d="M618 572C618 552 621 537 628 527C632 522 637 521 642 522" stroke="#ffe2b5" stroke-width="2" fill="none"/></g>
<clipPath id="bclip"><path d="M532.0 521.0C538.3 529.2 558.1 556.7 570.0 570.0C581.9 583.3 589.1 587.9 603.4 600.6C617.7 613.4 642.9 635.4 655.8 646.5C668.7 657.6 672.2 661.0 681.0 667.5C689.8 674.0 699.5 680.4 708.7 685.4C717.9 690.4 726.8 693.8 736.0 697.7C745.2 701.6 756.0 705.3 763.7 708.7C771.4 712.1 777.6 715.0 782.0 718.0C786.4 721.0 788.2 723.8 790.0 727.0C791.8 730.2 792.5 735.3 793.0 737.0L793.0 737.0C792.7 738.7 792.8 744.0 791.0 747.0C789.2 750.0 785.5 753.2 782.0 755.0C778.5 756.8 777.0 757.0 770.0 758.0C763.0 759.0 753.3 762.3 740.0 761.0C726.7 759.7 706.2 757.2 690.0 750.0C673.8 742.8 661.3 731.8 643.0 718.0C624.7 704.2 599.3 683.7 580.0 667.0C560.7 650.3 539.2 634.2 527.0 618.0C514.8 601.8 510.3 582.2 507.0 570.0C503.7 557.8 506.5 551.0 507.0 545.0C507.5 539.0 508.5 537.3 510.0 534.0C511.5 530.7 513.7 527.3 516.0 525.0C518.3 522.7 521.3 520.7 524.0 520.0C526.7 519.3 530.7 520.8 532.0 521.0Z"/></clipPath>
<path d="M532.0 521.0C538.3 529.2 558.1 556.7 570.0 570.0C581.9 583.3 589.1 587.9 603.4 600.6C617.7 613.4 642.9 635.4 655.8 646.5C668.7 657.6 672.2 661.0 681.0 667.5C689.8 674.0 699.5 680.4 708.7 685.4C717.9 690.4 726.8 693.8 736.0 697.7C745.2 701.6 756.0 705.3 763.7 708.7C771.4 712.1 777.6 715.0 782.0 718.0C786.4 721.0 788.2 723.8 790.0 727.0C791.8 730.2 792.5 735.3 793.0 737.0L793.0 737.0C792.7 738.7 792.8 744.0 791.0 747.0C789.2 750.0 785.5 753.2 782.0 755.0C778.5 756.8 777.0 757.0 770.0 758.0C763.0 759.0 753.3 762.3 740.0 761.0C726.7 759.7 706.2 757.2 690.0 750.0C673.8 742.8 661.3 731.8 643.0 718.0C624.7 704.2 599.3 683.7 580.0 667.0C560.7 650.3 539.2 634.2 527.0 618.0C514.8 601.8 510.3 582.2 507.0 570.0C503.7 557.8 506.5 551.0 507.0 545.0C507.5 539.0 508.5 537.3 510.0 534.0C511.5 530.7 513.7 527.3 516.0 525.0C518.3 522.7 521.3 520.7 524.0 520.0C526.7 519.3 530.7 520.8 532.0 521.0Z" fill="#8a52d0"/>
<g clip-path="url(#bclip)"><path d="M532.0 521.0C540.0 528.0 558.1 556.7 570.0 570.0C581.9 583.3 589.1 587.9 603.4 600.6C617.7 613.4 642.9 635.4 655.8 646.5C668.7 657.6 672.2 661.0 681.0 667.5C689.8 674.0 699.5 680.4 708.7 685.4C717.9 690.4 726.8 693.8 736.0 697.7C745.2 701.6 756.0 705.3 763.7 708.7C771.4 712.1 777.6 715.0 782.0 718.0C786.4 721.0 788.2 723.8 790.0 727.0C791.8 730.2 792.7 737.3 793.0 737.0C793.3 736.7 793.5 725.2 792.0 725.0C790.5 724.8 788.7 732.8 784.0 736.0C779.3 739.2 771.5 743.5 763.7 744.5C755.9 745.5 750.6 745.9 737.0 741.8C723.4 737.7 701.1 729.3 682.0 719.8C662.9 710.3 639.5 696.8 622.6 684.8C605.7 672.8 593.6 661.9 580.7 648.0C567.8 634.1 554.0 614.6 545.0 601.6C536.0 588.6 531.3 579.6 527.0 570.0C522.7 560.4 519.8 551.0 519.0 544.0C518.2 537.0 519.8 531.8 522.0 528.0C524.2 524.2 524.0 514.0 532.0 521.0Z" fill="#ac6ae8"/></g>
<path d="M533.5 523.0C539.8 531.2 559.6 558.7 571.5 572.0C583.4 585.3 590.6 589.9 604.9 602.6C619.2 615.4 644.4 637.4 657.3 648.5C670.2 659.6 673.7 663.0 682.5 669.5C691.3 676.0 701.0 682.4 710.2 687.4C719.4 692.4 728.3 695.8 737.5 699.7C746.7 703.6 757.5 707.3 765.2 710.7C772.9 714.1 779.1 717.0 783.5 720.0C787.9 723.0 789.7 725.8 791.5 729.0C793.3 732.2 794.0 737.3 794.5 739.0" stroke="#0c0a5f" stroke-width="10" fill="none" stroke-linecap="round"/>
<path d="M531.7 520.5C538.0 528.7 557.8 556.2 569.7 569.5C581.6 582.8 588.8 587.4 603.1 600.1C617.4 612.9 642.6 634.9 655.5 646.0C668.4 657.1 671.9 660.5 680.7 667.0C689.5 673.5 699.2 679.9 708.4 684.9C717.6 689.9 726.5 693.3 735.7 697.2C744.9 701.1 755.7 704.8 763.4 708.2C771.1 711.6 777.3 714.5 781.7 717.5C786.1 720.5 787.9 723.3 789.7 726.5C791.5 729.7 792.2 734.8 792.7 736.5" stroke="#fff" stroke-width="4" fill="none" stroke-linecap="round"/>
<clipPath id="sfc"><path d="M555.0 531.0C556.0 527.8 561.8 526.5 566.0 526.0C570.2 525.5 576.0 526.5 580.0 528.0C584.0 529.5 587.7 531.7 590.0 535.0C592.3 538.3 593.0 543.0 594.0 548.0C595.0 553.0 595.8 560.0 596.0 565.0C596.2 570.0 596.7 576.2 595.0 578.0C593.3 579.8 589.8 579.0 586.0 576.0C582.2 573.0 576.3 565.2 572.0 560.0C567.7 554.8 562.8 549.8 560.0 545.0C557.2 540.2 554.0 534.2 555.0 531.0Z"/></clipPath>
<path d="M555.0 531.0C556.0 527.8 561.8 526.5 566.0 526.0C570.2 525.5 576.0 526.5 580.0 528.0C584.0 529.5 587.7 531.7 590.0 535.0C592.3 538.3 593.0 543.0 594.0 548.0C595.0 553.0 595.8 560.0 596.0 565.0C596.2 570.0 596.7 576.2 595.0 578.0C593.3 579.8 589.8 579.0 586.0 576.0C582.2 573.0 576.3 565.2 572.0 560.0C567.7 554.8 562.8 549.8 560.0 545.0C557.2 540.2 554.0 534.2 555.0 531.0Z" fill="#0c0a5f"/>
<path d="M556 531C560 528 565 527 568 527C573 540 577 553 580 567C572 556 562 542 556 531Z" fill="#d3cfe5"/>
<path d="M562 527C566 526 569 526 571 527C574 537 577 547 579 556C573 546 567 536 562 527Z" fill="#fff"/>
<path d="M578 532C590 536 596 556 596 579C588 572 580 552 578 532Z" fill="#0f8de6"/>
<path d="M585 545C590 555 593 566 595 578C591 570 588 560 585 545Z" fill="#0a6fd0"/>
<path d="M611 602C611 593 619 586.5 627 586.5C635 586.5 642 593 642 602Z" fill="#fff"/>
<clipPath id="glc"><path d="M605.0 625.0C605.8 620.8 606.2 613.5 609.0 610.0C611.8 606.5 616.8 605.0 622.0 604.0C627.2 603.0 634.5 603.0 640.0 604.0C645.5 605.0 651.0 606.7 655.0 610.0C659.0 613.3 662.3 619.5 664.0 624.0C665.7 628.5 665.8 634.3 665.0 637.0C664.2 639.7 660.8 640.0 659.0 640.0C657.2 640.0 655.2 636.0 654.0 637.0C652.8 638.0 653.3 643.2 652.0 646.0C650.7 648.8 648.7 652.5 646.0 654.0C643.3 655.5 639.3 655.2 636.0 655.0C632.7 654.8 629.3 653.8 626.0 653.0C622.7 652.2 619.0 651.5 616.0 650.0C613.0 648.5 610.0 646.5 608.0 644.0C606.0 641.5 604.5 638.2 604.0 635.0C603.5 631.8 604.2 629.2 605.0 625.0Z"/></clipPath>
<path d="M605.0 625.0C605.8 620.8 606.2 613.5 609.0 610.0C611.8 606.5 616.8 605.0 622.0 604.0C627.2 603.0 634.5 603.0 640.0 604.0C645.5 605.0 651.0 606.7 655.0 610.0C659.0 613.3 662.3 619.5 664.0 624.0C665.7 628.5 665.8 634.3 665.0 637.0C664.2 639.7 660.8 640.0 659.0 640.0C657.2 640.0 655.2 636.0 654.0 637.0C652.8 638.0 653.3 643.2 652.0 646.0C650.7 648.8 648.7 652.5 646.0 654.0C643.3 655.5 639.3 655.2 636.0 655.0C632.7 654.8 629.3 653.8 626.0 653.0C622.7 652.2 619.0 651.5 616.0 650.0C613.0 648.5 610.0 646.5 608.0 644.0C606.0 641.5 604.5 638.2 604.0 635.0C603.5 631.8 604.2 629.2 605.0 625.0Z" fill="#fff"/>
<g clip-path="url(#glc)">
<path d="M600 638C605 645 610 648 614 646L616 660L600 660Z M614 644C618 650 626 652 630 648L632 660L612 660Z M630 648C636 653 645 652 650 645L652 660L628 660Z M655 625C660 628 664 632 667 636L668 620Z" fill="#d3cfe5"/>
<path d="M613.6 635C614 640 614.5 644 615 648M630 635C630.5 642 630.5 647 630 652" stroke="#0c0a5f" stroke-width="3" fill="none" stroke-linecap="round"/>
</g>
<clipPath id="lbc"><path d="M748.0 652.0C746.7 647.8 749.3 646.6 752.0 645.0C754.7 643.4 759.7 642.5 764.0 642.5C768.3 642.5 774.7 642.9 778.0 645.0C781.3 647.1 783.0 651.2 784.0 655.0C785.0 658.8 785.0 664.5 784.0 668.0C783.0 671.5 782.0 675.7 778.0 676.0C774.0 676.3 765.0 674.0 760.0 670.0C755.0 666.0 749.3 656.2 748.0 652.0Z"/></clipPath>
<path d="M748.0 652.0C746.7 647.8 749.3 646.6 752.0 645.0C754.7 643.4 759.7 642.5 764.0 642.5C768.3 642.5 774.7 642.9 778.0 645.0C781.3 647.1 783.0 651.2 784.0 655.0C785.0 658.8 785.0 664.5 784.0 668.0C783.0 671.5 782.0 675.7 778.0 676.0C774.0 676.3 765.0 674.0 760.0 670.0C755.0 666.0 749.3 656.2 748.0 652.0Z" fill="#e39c4f"/>
<g clip-path="url(#lbc)"><path d="M740 655C755 660 770 660 785 652L785 635L740 635Z" fill="#fbb543"/><path d="M755 648C763 644 772 644 779 648" stroke="#ffe2b5" stroke-width="2" fill="none"/></g>
<clipPath id="sbc"><path d="M709.0 680.0C707.3 677.0 712.0 670.7 718.0 668.0C724.0 665.3 737.2 663.0 745.0 664.0C752.8 665.0 760.3 669.7 765.0 674.0C769.7 678.3 771.5 685.3 773.0 690.0C774.5 694.7 777.8 701.3 774.0 702.0C770.2 702.7 757.7 696.7 750.0 694.0C742.3 691.3 734.8 688.3 728.0 686.0C721.2 683.7 710.7 683.0 709.0 680.0Z"/></clipPath>
<path d="M709.0 680.0C707.3 677.0 712.0 670.7 718.0 668.0C724.0 665.3 737.2 663.0 745.0 664.0C752.8 665.0 760.3 669.7 765.0 674.0C769.7 678.3 771.5 685.3 773.0 690.0C774.5 694.7 777.8 701.3 774.0 702.0C770.2 702.7 757.7 696.7 750.0 694.0C742.3 691.3 734.8 688.3 728.0 686.0C721.2 683.7 710.7 683.0 709.0 680.0Z" fill="#0c0a5f"/>
<g clip-path="url(#sbc)">
<path d="M714 670C732 662 752 663 766 673L768 678C750 670 732 668 714 670Z" fill="#74d2f8"/>
<path d="M724 673C745 671 762 678 771 688L774 696C758 687 742 680 722 677Z" fill="#0f8de6"/>
<path d="M709 680C732 684 755 692 776 698L776 706C752 698 730 690 709 685Z" fill="#d3cfe5"/>
</g>
<path d="M557 624L565 615" stroke="#0c0a5f" stroke-width="43" stroke-linecap="round"/>
<circle cx="557" cy="624" r="14" fill="#8c8c8c"/>
<path d="M561.0 619.5m-10.5 -10.5l21.0 21.0" stroke="#0c0a5f" stroke-width="2"/>
<circle cx="565" cy="615" r="15" fill="#d3cfe5"/>
<path d="M552.25 610.5A15 15 0 0 1 572.5 602.25L565 615Z" fill="#fff"/>
<circle cx="565.5" cy="614" r="7" fill="#0c0a5f"/>
<path d="M531 650L538 642" stroke="#0c0a5f" stroke-width="44.0" stroke-linecap="round"/>
<circle cx="531" cy="650" r="14.5" fill="#8c8c8c"/>
<path d="M534.5 646.0m-10.85 -10.85l21.7 21.7" stroke="#0c0a5f" stroke-width="2"/>
<circle cx="538" cy="642" r="15.5" fill="#d3cfe5"/>
<path d="M524.825 637.35A15.5 15.5 0 0 1 545.75 628.825L538 642Z" fill="#fff"/>
<circle cx="538.5" cy="641" r="7" fill="#0c0a5f"/>
<path d="M684 722L692 714" stroke="#0c0a5f" stroke-width="43" stroke-linecap="round"/>
<circle cx="684" cy="722" r="14" fill="#8c8c8c"/>
<path d="M688.0 718.0m-10.5 -10.5l21.0 21.0" stroke="#0c0a5f" stroke-width="2"/>
<circle cx="692" cy="714" r="15" fill="#d3cfe5"/>
<path d="M679.25 709.5A15 15 0 0 1 699.5 701.25L692 714Z" fill="#fff"/>
<circle cx="692.5" cy="713" r="7" fill="#0c0a5f"/>
<path d="M658 748L665.7 740" stroke="#0c0a5f" stroke-width="43" stroke-linecap="round"/>
<circle cx="658" cy="748" r="14" fill="#8c8c8c"/>
<path d="M661.85 744.0m-10.5 -10.5l21.0 21.0" stroke="#0c0a5f" stroke-width="2"/>
<circle cx="665.7" cy="740" r="15" fill="#d3cfe5"/>
<path d="M652.95 735.5A15 15 0 0 1 673.2 727.25L665.7 740Z" fill="#fff"/>
<circle cx="666.2" cy="739" r="7" fill="#0c0a5f"/><!--/DONUT-->
<rect x="200" y="234" width="1134" height="655" fill="none" stroke="#000" stroke-width="2"/>
<rect x="200" y="234" width="1134" height="655" fill="none" stroke="#fff" stroke-width="2" stroke-dasharray="8 8"/>
</svg>
</body></html>
